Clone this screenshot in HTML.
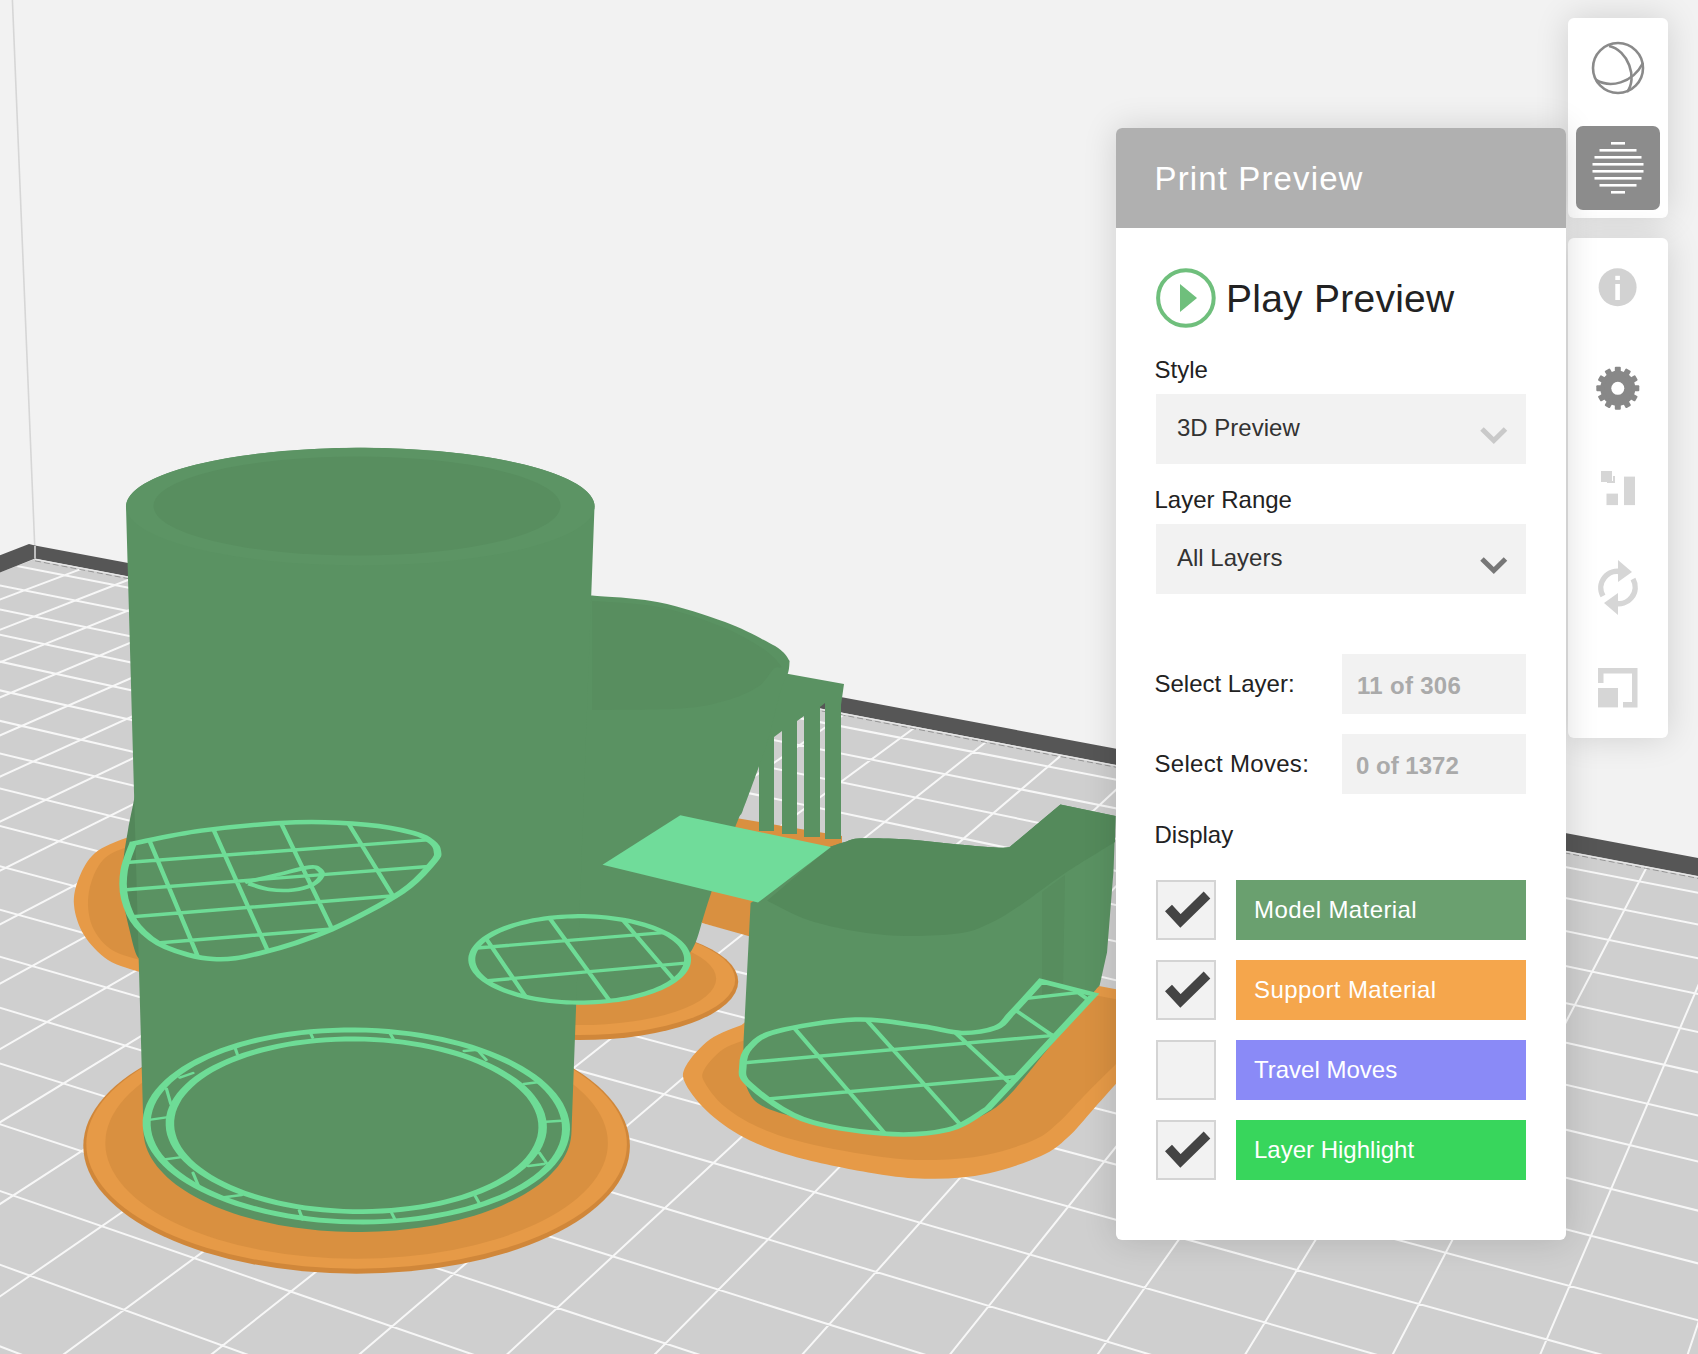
<!DOCTYPE html>
<html><head><meta charset="utf-8">
<style>
html,body{margin:0;padding:0;}
body{width:1698px;height:1354px;position:relative;overflow:hidden;background:#f2f2f2;font-family:"Liberation Sans",sans-serif;}
svg.scene{position:absolute;left:0;top:0;}
.t{position:absolute;white-space:nowrap;line-height:1;}
</style></head><body>
<svg class="scene" width="1698" height="1354" viewBox="0 0 1698 1354">
<defs>
<clipPath id="floorclip"><path d="M35 560 L1698 876 L1698 1354 L0 1354 L0 572.5 Z"/></clipPath>
</defs>
<rect width="1698" height="1354" fill="#f2f2f2"/>
<path d="M12.4 0 L34.8 548" stroke="#d6d6d6" stroke-width="1.6" fill="none"/>
<path d="M35 559 L1698 876 L1698 1354 L0 1354 L0 572.5 Z" fill="#cfcfcf"/>
<g clip-path="url(#floorclip)"><path d="M84.8 567.6L-1373.1 1115.2M135.0 577.2L-1317.3 1142.5M186.4 587.0L-1259.1 1170.9M239.1 597.1L-1198.5 1200.5M293.0 607.4L-1135.4 1231.4M348.3 618.0L-1069.4 1263.7M405.0 628.9L-1000.5 1297.4M463.2 640.0L-928.5 1332.6M522.8 651.4L-853.1 1369.5M584.0 663.2L-774.1 1408.1M646.9 675.2L-691.2 1448.7M711.4 687.6L-604.1 1491.3M777.6 700.2L-512.6 1536.1M845.8 713.3L-416.1 1583.2M915.8 726.7L-314.5 1632.9M987.8 740.5L-207.1 1685.4M1061.9 754.7L-93.6 1741.0M1138.1 769.3L26.7 1799.8M1216.6 784.3L154.3 1862.2M1297.5 799.8L289.9 1928.5M1380.8 815.8L434.4 1999.2M1466.8 832.2L588.5 2074.6M1555.4 849.2L753.5 2155.3M1646.9 866.7L930.3 2241.7M1741.4 884.8L1120.3 2334.7M1839.0 903.5L1325.1 2434.8M1939.9 922.8L1546.4 2543.1M2044.3 942.8L1786.4 2660.5M2152.3 963.5L2047.4 2788.1M2264.1 984.9L2332.5 2927.6M16.9 566.1L2382.3 1025.7M-23.4 580.8L2387.0 1062.2M-65.3 596.0L2391.9 1100.9M-108.7 611.7L2397.2 1142.0M-153.8 628.1L2402.8 1185.7M-200.7 645.2L2408.8 1232.3M-249.5 662.9L2415.1 1282.1M-300.3 681.4L2421.9 1335.3M-353.3 700.6L2429.2 1392.4M-408.5 720.7L2437.1 1453.8M-466.1 741.6L2445.6 1520.1M-526.3 763.5L2454.7 1591.7M-589.2 786.3L2464.7 1669.4M-655.1 810.3L2475.5 1754.1M-724.2 835.4L2487.3 1846.6M-796.7 861.7L2500.3 1948.2M-872.8 889.4L2514.6 2060.1M-952.9 918.5L2530.5 2184.2M-1037.2 949.1L2548.2 2322.5M-1126.2 981.5L2568.0 2477.5M-1220.1 1015.6L2590.4 2652.6M-1319.4 1051.7L2615.9 2851.8" stroke="#f7f7f7" stroke-width="2" fill="none"/></g>
<path d="M35 545.6 L1698 858 L1698 876 L35 558.5 Z" fill="#565656"/>
<path d="M29 544.1 L35 545.6 L35 558.5 L0 572.4 L0 555.2 Z" fill="#565656"/>
<path d="M35 546 L35 558.5" stroke="#e0e0e0" stroke-width="1.5"/>
<path d="M35 560.8 L1698 878.3" stroke="#7a7a7a" stroke-width="1" stroke-dasharray="6 3" fill="none" opacity="0.7"/>
<path d="M35 559.3 L1698 876.8" stroke="#e8e8e8" stroke-width="1.2" fill="none"/>
<path d="M736.0 818.0 L842.0 836.0 L842.0 846.0 L790.0 900.0 L752.0 937.0 L702.0 923.0 L700.0 850.0Z" fill="#d99040"/>
<path d="M140.0 972.0C134.7 970.0 117.3 966.2 108.0 960.0C98.7 953.8 89.7 944.2 84.0 935.0C78.3 925.8 74.8 914.5 74.0 905.0C73.2 895.5 75.5 886.7 79.0 878.0C82.5 869.3 87.2 859.7 95.0 853.0C102.8 846.3 116.8 841.2 126.0 838.0C135.2 834.8 146.0 834.7 150.0 834.0Z" fill="#e69a47"/>
<path d="M140.0 960.0C135.3 958.3 119.7 955.0 112.0 950.0C104.3 945.0 98.0 937.5 94.0 930.0C90.0 922.5 88.3 913.3 88.0 905.0C87.7 896.7 89.2 887.8 92.0 880.0C94.8 872.2 98.7 863.7 105.0 858.0C111.3 852.3 122.5 848.5 130.0 846.0C137.5 843.5 146.7 843.5 150.0 843.0Z" fill="#d99040"/>
<path d="M135.0 795.0C134.7 796.7 134.2 799.2 133.0 805.0C131.8 810.8 129.7 820.0 128.0 830.0C126.3 840.0 123.8 853.3 123.0 865.0C122.2 876.7 122.3 888.8 123.5 900.0C124.7 911.2 127.8 922.7 130.0 932.0C132.2 941.3 134.5 951.3 137.0 956.0C139.5 960.7 143.7 959.3 145.0 960.0L150 960 L150 795Z" fill="#53875a"/>
<ellipse cx="356.6" cy="1146" rx="273.3" ry="127.7" fill="#d0873a"/>
<ellipse cx="356.6" cy="1144" rx="270.3" ry="124.7" fill="#e69a47"/>
<ellipse cx="356.6" cy="1143" rx="251.3" ry="115.7" fill="#d99040"/>
<ellipse cx="579.5" cy="981.7" rx="158.7" ry="58.4" fill="#d0873a"/>
<ellipse cx="579.5" cy="979.7" rx="155.7" ry="55.4" fill="#e69a47"/>
<ellipse cx="579.5" cy="978.7" rx="136.7" ry="46.4" fill="#d99040"/>
<path d="M783.0 673.0 L844.0 684.0 L841.0 705.0 L841.0 839.0 L825.0 839.0 L825.0 703.0 L820.0 707.0 L820.0 837.0 L804.0 837.0 L804.0 716.0 L797.0 721.0 L797.0 834.0 L782.0 834.0 L782.0 731.0 L774.0 737.0 L774.0 831.0 L759.0 831.0 L759.0 747.0 L745.0 757.0Z" fill="#5a9262"/>
<path d="M592.2 595.5C603.3 596.6 636.5 597.8 658.6 602.2C680.8 606.6 706.6 615.3 725.1 622.1C743.6 628.9 759.8 638.0 769.4 643.0C779.0 648.0 779.6 649.0 783.0 652.0C786.4 655.0 788.5 659.5 789.6 661.0L789.6 661.0C789.3 663.0 789.5 668.2 788.0 673.0C786.5 677.8 783.9 679.6 780.8 690.0C777.7 700.4 773.1 722.1 769.4 735.1C765.6 748.1 762.7 755.8 758.3 768.3C753.9 780.8 746.2 801.8 742.8 810.4C739.4 819.0 742.0 810.1 738.0 820.0C734.0 829.9 724.6 854.2 719.1 869.5C713.6 884.8 708.9 899.8 705.0 912.0C701.1 924.2 698.8 934.7 695.6 942.5C692.4 950.3 687.6 956.2 686.0 959.0L687.2 963.2 L686.9 964.3 L686.6 965.3 L686.2 966.4 L685.7 967.5 L685.1 968.6 L684.5 969.7 L683.8 970.7 L683.1 971.8 L682.3 972.8 L681.4 973.9 L680.4 974.9 L679.4 975.9 L678.3 976.9 L677.2 977.9 L676.0 978.9 L674.7 979.9 L673.4 980.8 L672.0 981.8 L670.5 982.7 L669.0 983.6 L667.5 984.5 L665.8 985.4 L664.2 986.3 L662.4 987.1 L660.6 988.0 L658.8 988.8 L656.9 989.6 L655.0 990.3 L653.0 991.1 L651.0 991.8 L648.9 992.6 L646.7 993.2 L644.6 993.9 L642.4 994.6 L640.1 995.2 L637.8 995.8 L635.5 996.4 L633.1 996.9 L630.7 997.5 L628.3 998.0 L625.8 998.5 L623.3 998.9 L620.8 999.3 L618.3 999.7 L615.7 1000.1 L613.1 1000.5 L610.5 1000.8 L607.9 1001.1 L605.2 1001.4 L602.5 1001.6 L599.8 1001.8 L597.1 1002.0 L594.4 1002.2 L591.7 1002.3 L589.0 1002.4 L586.3 1002.5 L583.5 1002.6 L580.8 1002.6 L578.0 1002.6 L575.3 1002.6 L572.6 1002.5 L569.8 1002.4 L567.1 1002.3 L564.4 1002.2 L561.7 1002.0 L559.0 1001.8 L556.3 1001.6 L553.6 1001.3 L551.0 1001.0 L548.3 1000.7 L545.7 1000.4 L543.1 1000.0 L540.6 999.7 L538.0 999.2 L535.5 998.8 L533.0 998.3 L530.6 997.9 L528.1 997.3 L525.8 996.8 L560 1000 L560 595.5Z" fill="#5a9262"/>
<path d="M592.2 601.0C603.3 602.0 637.3 602.8 658.6 607.0C679.9 611.2 702.8 619.2 720.0 626.0C737.2 632.8 751.8 641.3 762.0 648.0C772.2 654.7 779.0 662.6 781.0 666.0C783.0 669.4 777.7 665.2 773.9 668.6C770.1 672.0 766.4 681.0 758.3 686.4C750.2 691.8 738.0 697.1 725.1 700.8C712.2 704.5 702.9 707.0 680.8 708.5C658.6 710.0 607.0 709.8 592.2 710.0Z" fill="#588e5f"/>
<path d="M126.0 506.6 L126.2 504.3 L126.7 501.9 L127.7 499.6 L129.0 497.3 L130.6 495.0 L132.6 492.7 L135.0 490.4 L137.8 488.2 L140.8 486.0 L144.3 483.8 L148.1 481.7 L152.2 479.6 L156.6 477.5 L161.4 475.5 L166.5 473.6 L171.8 471.7 L177.5 469.8 L183.5 468.0 L189.8 466.3 L196.3 464.6 L203.1 463.0 L210.1 461.5 L217.4 460.0 L224.9 458.6 L232.6 457.3 L240.5 456.1 L248.6 454.9 L256.8 453.8 L265.3 452.9 L273.9 451.9 L282.6 451.1 L291.5 450.4 L300.4 449.8 L309.5 449.2 L318.6 448.7 L327.8 448.4 L337.0 448.1 L346.3 447.9 L355.6 447.8 L365.0 447.8 L374.3 447.9 L383.6 448.1 L392.8 448.4 L402.0 448.7 L411.1 449.2 L420.2 449.8 L429.1 450.4 L438.0 451.1 L446.7 451.9 L455.3 452.9 L463.8 453.8 L472.0 454.9 L480.1 456.1 L488.0 457.3 L495.7 458.6 L503.2 460.0 L510.5 461.5 L517.5 463.0 L524.3 464.6 L530.8 466.3 L537.1 468.0 L543.1 469.8 L548.8 471.7 L554.1 473.6 L559.2 475.5 L564.0 477.5 L568.4 479.6 L572.5 481.7 L576.3 483.8 L579.8 486.0 L582.8 488.2 L585.6 490.4 L588.0 492.7 L590.0 495.0 L591.6 497.3 L592.9 499.6 L593.9 501.9 L594.4 504.3 L594.6 506.6 L594.5 506.6 L571.5 1131 L571.5 1131.0 L571.3 1135.0 L570.8 1139.0 L570.0 1143.0 L568.8 1147.0 L567.3 1151.0 L565.4 1154.9 L563.3 1158.8 L560.8 1162.6 L557.9 1166.4 L554.8 1170.1 L551.3 1173.8 L547.6 1177.4 L543.5 1180.9 L539.2 1184.4 L534.5 1187.7 L529.6 1191.0 L524.4 1194.2 L519.0 1197.3 L513.3 1200.3 L507.3 1203.1 L501.1 1205.9 L494.7 1208.5 L488.1 1211.0 L481.2 1213.4 L474.2 1215.7 L466.9 1217.8 L459.5 1219.8 L452.0 1221.6 L444.3 1223.3 L436.4 1224.9 L428.5 1226.3 L420.4 1227.5 L412.2 1228.6 L403.9 1229.6 L395.6 1230.4 L387.2 1231.0 L378.7 1231.5 L370.3 1231.8 L361.8 1232.0 L353.2 1232.0 L344.7 1231.8 L336.3 1231.5 L327.8 1231.0 L319.4 1230.4 L311.1 1229.6 L302.8 1228.6 L294.6 1227.5 L286.5 1226.3 L278.6 1224.9 L270.7 1223.3 L263.0 1221.6 L255.5 1219.8 L248.1 1217.8 L240.8 1215.7 L233.8 1213.4 L226.9 1211.0 L220.3 1208.5 L213.9 1205.9 L207.7 1203.1 L201.7 1200.3 L196.0 1197.3 L190.6 1194.2 L185.4 1191.0 L180.5 1187.7 L175.8 1184.4 L171.5 1180.9 L167.4 1177.4 L163.7 1173.8 L160.2 1170.1 L157.1 1166.4 L154.2 1162.6 L151.7 1158.8 L149.6 1154.9 L147.7 1151.0 L146.2 1147.0 L145.0 1143.0 L144.2 1139.0 L143.7 1135.0 L143.5 1131.0 L126 506.6Z" fill="#5a9262"/>
<ellipse cx="360.3" cy="506.6" rx="234.3" ry="58.8" fill="#5c9464"/>
<ellipse cx="357" cy="506" rx="203.5" ry="49.5" fill="#588e5f"/>
<path d="M741.6 1025.0C736.3 1027.4 719.1 1032.7 709.8 1039.5C700.5 1046.3 689.9 1058.5 685.9 1066.0C681.9 1073.5 681.9 1076.6 685.9 1084.6C689.9 1092.5 699.2 1104.4 709.8 1113.7C720.4 1123.0 734.0 1132.7 749.5 1140.2C765.0 1147.7 780.4 1153.0 802.5 1158.8C824.6 1164.5 859.9 1171.4 882.0 1174.7C904.1 1178.0 917.3 1178.9 935.0 1178.7C952.7 1178.5 970.3 1177.2 988.0 1173.4C1005.7 1169.6 1027.7 1162.1 1041.0 1156.1C1054.3 1150.1 1058.8 1145.5 1067.6 1137.6C1076.4 1129.6 1085.3 1118.1 1094.0 1108.4C1102.7 1098.7 1115.7 1084.2 1120.0 1079.3 L1120 990 L1099 986 L760 1010Z" fill="#e69a47"/>
<path d="M745.0 1040.0C741.2 1041.7 728.8 1045.0 722.0 1050.0C715.2 1055.0 706.8 1064.5 704.0 1070.0C701.2 1075.5 701.7 1077.0 705.0 1083.0C708.3 1089.0 715.2 1098.7 724.0 1106.0C732.8 1113.3 744.3 1120.8 758.0 1127.0C771.7 1133.2 785.3 1138.0 806.0 1143.0C826.7 1148.0 860.5 1154.2 882.0 1157.0C903.5 1159.8 917.7 1160.3 935.0 1160.0C952.3 1159.7 969.5 1158.3 986.0 1155.0C1002.5 1151.7 1022.0 1145.3 1034.0 1140.0C1046.0 1134.7 1049.7 1130.3 1058.0 1123.0C1066.3 1115.7 1073.7 1106.5 1084.0 1096.0C1094.3 1085.5 1114.0 1066.0 1120.0 1060.0 L1120 1000 L1099 996 L760 1020Z" fill="#d99040"/>
<path d="M750.6 903 L830.7 846.5 L830.7 846.5C833.1 845.8 839.9 843.4 845.0 842.0C850.1 840.6 850.7 838.7 861.3 838.3C871.9 837.9 892.8 838.5 908.5 839.5C924.2 840.5 939.9 842.8 955.6 844.2C971.3 845.6 993.3 847.6 1002.7 847.7C1012.1 847.8 1010.5 845.5 1012.0 845.0 L1060.4 804.6 L1115.5 816 L1113.5 871 L1107 952.5 L1099.4 986.5C1098.5 987.4 1102.4 981.6 1094.0 991.8C1085.6 1002.0 1064.5 1029.0 1049.0 1047.5C1033.5 1066.0 1015.9 1090.2 1001.3 1103.0C986.7 1115.8 972.5 1119.6 961.5 1124.3C950.5 1129.0 948.2 1129.5 935.0 1131.0C921.8 1132.5 904.1 1135.6 882.0 1133.6C859.9 1131.6 823.2 1124.1 802.5 1119.0C781.8 1113.9 767.4 1110.1 757.5 1103.0C747.6 1095.9 745.3 1081.0 742.9 1076.6 L743.6 1040 Z" fill="#5a9262"/>
<path d="M767.1 900.7 L830.7 846.5 L830.7 846.5C833.1 845.8 839.9 843.4 845.0 842.0C850.1 840.6 850.7 838.7 861.3 838.3C871.9 837.9 892.8 838.5 908.5 839.5C924.2 840.5 939.9 842.8 955.6 844.2C971.3 845.6 993.3 847.6 1002.7 847.7C1012.1 847.8 1010.5 845.5 1012.0 845.0 L1060.4 804.6 L1115.5 816 L1115.0 842.0C1106.3 847.4 1078.4 864.2 1063.0 874.5C1047.6 884.8 1034.7 895.6 1022.5 903.7C1010.3 911.8 1001.1 918.2 990.0 923.2C978.9 928.2 973.1 931.8 955.6 933.7C938.1 935.7 908.5 936.9 884.9 934.9C861.3 932.9 833.8 927.6 814.2 921.9C794.6 916.2 775.0 904.2 767.1 900.7Z" fill="#548a5b"/>
<path d="M1042 892 L1065 875 L1063 985 L1042 1000Z" fill="#53875a" opacity="0.5"/>
<path d="M680.3 815.3 L831 847.1 L758 902.5 L602.5 864.8Z" fill="#70dc9a"/>
<path fill-rule="evenodd" d="M570.0 1129.4 L569.6 1134.5 L568.6 1139.7 L567.1 1144.8 L564.9 1149.9 L562.2 1154.9 L558.9 1159.8 L555.0 1164.7 L550.6 1169.4 L545.6 1174.0 L540.1 1178.5 L534.1 1182.8 L527.6 1187.0 L520.6 1191.0 L513.2 1194.8 L505.3 1198.4 L497.0 1201.8 L488.3 1205.0 L479.3 1208.0 L469.9 1210.8 L460.2 1213.3 L450.2 1215.6 L439.9 1217.6 L429.4 1219.4 L418.7 1220.9 L407.8 1222.1 L396.8 1223.1 L385.7 1223.8 L374.5 1224.3 L363.2 1224.4 L351.9 1224.3 L340.7 1224.0 L329.4 1223.3 L318.3 1222.4 L307.2 1221.2 L296.3 1219.7 L285.6 1218.0 L275.1 1216.0 L264.7 1213.8 L254.7 1211.3 L244.9 1208.6 L235.4 1205.7 L226.3 1202.5 L217.5 1199.1 L209.1 1195.5 L201.2 1191.8 L193.6 1187.8 L186.6 1183.7 L179.9 1179.4 L173.8 1174.9 L168.2 1170.4 L163.1 1165.7 L158.6 1160.9 L154.6 1155.9 L151.1 1151.0 L148.3 1145.9 L146.0 1140.8 L144.3 1135.6 L143.2 1130.4 L142.7 1125.2 L142.7 1120.0 L143.4 1114.9 L144.7 1109.7 L146.5 1104.6 L149.0 1099.6 L152.0 1094.6 L155.6 1089.7 L159.8 1085.0 L164.5 1080.3 L169.7 1075.7 L175.4 1071.4 L181.7 1067.1 L188.4 1063.0 L195.7 1059.1 L203.3 1055.4 L211.4 1051.9 L219.9 1048.6 L228.8 1045.5 L238.0 1042.6 L247.5 1039.9 L257.4 1037.5 L267.5 1035.4 L277.9 1033.5 L288.5 1031.8 L299.3 1030.4 L310.3 1029.3 L321.3 1028.5 L332.5 1027.9 L343.8 1027.6 L355.0 1027.6 L366.3 1027.8 L377.6 1028.3 L388.7 1029.1 L399.8 1030.2 L410.8 1031.5 L421.7 1033.1 L432.3 1035.0 L442.7 1037.1 L452.9 1039.4 L462.8 1042.0 L472.5 1044.8 L481.8 1047.9 L490.7 1051.2 L499.3 1054.7 L507.5 1058.3 L515.2 1062.2 L522.6 1066.2 L529.4 1070.5 L535.8 1074.8 L541.7 1079.3 L547.0 1084.0 L551.8 1088.7 L556.1 1093.6 L559.8 1098.5 L563.0 1103.6 L565.5 1108.7 L567.5 1113.8 L568.9 1119.0 L569.8 1124.2 L570.0 1129.4Z M562.0 1129.2 L561.6 1134.2 L560.7 1139.1 L559.2 1144.0 L557.1 1148.8 L554.5 1153.5 L551.3 1158.2 L547.6 1162.8 L543.3 1167.3 L538.5 1171.7 L533.2 1175.9 L527.4 1180.1 L521.2 1184.0 L514.5 1187.8 L507.3 1191.4 L499.7 1194.9 L491.7 1198.1 L483.4 1201.2 L474.7 1204.0 L465.6 1206.7 L456.3 1209.0 L446.7 1211.2 L436.8 1213.1 L426.7 1214.8 L416.4 1216.3 L405.9 1217.5 L395.3 1218.4 L384.6 1219.1 L373.8 1219.5 L363.0 1219.6 L352.1 1219.5 L341.3 1219.2 L330.5 1218.5 L319.7 1217.7 L309.1 1216.5 L298.6 1215.1 L288.3 1213.5 L278.1 1211.6 L268.2 1209.5 L258.5 1207.1 L249.1 1204.5 L240.0 1201.7 L231.2 1198.7 L222.7 1195.5 L214.7 1192.1 L207.0 1188.5 L199.7 1184.8 L192.9 1180.8 L186.6 1176.7 L180.7 1172.5 L175.3 1168.2 L170.4 1163.7 L166.0 1159.1 L162.1 1154.5 L158.8 1149.7 L156.1 1144.9 L153.9 1140.0 L152.2 1135.1 L151.2 1130.2 L150.7 1125.2 L150.7 1120.3 L151.4 1115.4 L152.6 1110.5 L154.4 1105.6 L156.7 1100.8 L159.7 1096.1 L163.1 1091.5 L167.1 1086.9 L171.6 1082.5 L176.7 1078.2 L182.2 1074.0 L188.2 1069.9 L194.7 1066.1 L201.7 1062.4 L209.0 1058.8 L216.8 1055.5 L225.0 1052.3 L233.5 1049.4 L242.4 1046.6 L251.6 1044.1 L261.1 1041.8 L270.8 1039.8 L280.8 1038.0 L291.0 1036.4 L301.4 1035.1 L312.0 1034.0 L322.6 1033.2 L333.4 1032.7 L344.2 1032.4 L355.1 1032.4 L365.9 1032.6 L376.7 1033.1 L387.5 1033.9 L398.2 1034.9 L408.8 1036.1 L419.2 1037.7 L429.4 1039.4 L439.5 1041.4 L449.3 1043.7 L458.8 1046.1 L468.1 1048.8 L477.1 1051.7 L485.7 1054.8 L493.9 1058.2 L501.8 1061.7 L509.3 1065.3 L516.3 1069.2 L522.9 1073.2 L529.1 1077.3 L534.7 1081.6 L539.9 1086.1 L544.5 1090.6 L548.6 1095.2 L552.2 1099.9 L555.2 1104.7 L557.7 1109.5 L559.6 1114.4 L561.0 1119.3 L561.8 1124.3 L562.0 1129.2Z" fill="#6edc96"/>
<path fill-rule="evenodd" d="M546.9 1127.6 L546.6 1132.3 L545.7 1137.0 L544.3 1141.6 L542.4 1146.2 L540.0 1150.7 L537.1 1155.1 L533.6 1159.5 L529.7 1163.8 L525.3 1167.9 L520.4 1172.0 L515.0 1175.9 L509.2 1179.7 L503.0 1183.3 L496.4 1186.8 L489.4 1190.1 L482.0 1193.2 L474.3 1196.1 L466.2 1198.8 L457.8 1201.3 L449.2 1203.6 L440.3 1205.7 L431.1 1207.6 L421.7 1209.2 L412.2 1210.6 L402.5 1211.8 L392.7 1212.7 L382.8 1213.4 L372.8 1213.8 L362.7 1214.0 L352.7 1214.0 L342.6 1213.6 L332.6 1213.1 L322.6 1212.3 L312.8 1211.3 L303.0 1210.0 L293.5 1208.5 L284.0 1206.7 L274.8 1204.7 L265.8 1202.5 L257.1 1200.1 L248.7 1197.5 L240.5 1194.7 L232.7 1191.7 L225.2 1188.5 L218.1 1185.1 L211.3 1181.5 L205.0 1177.8 L199.1 1174.0 L193.6 1170.0 L188.6 1165.9 L184.0 1161.7 L179.9 1157.4 L176.4 1153.0 L173.3 1148.5 L170.7 1143.9 L168.7 1139.3 L167.1 1134.7 L166.1 1130.0 L165.7 1125.3 L165.7 1120.6 L166.3 1116.0 L167.4 1111.3 L169.1 1106.7 L171.2 1102.2 L173.9 1097.7 L177.1 1093.3 L180.8 1088.9 L185.0 1084.7 L189.6 1080.6 L194.7 1076.6 L200.3 1072.8 L206.3 1069.1 L212.7 1065.5 L219.6 1062.2 L226.8 1059.0 L234.3 1055.9 L242.2 1053.1 L250.5 1050.5 L259.0 1048.1 L267.8 1045.9 L276.8 1043.9 L286.0 1042.2 L295.5 1040.6 L305.1 1039.4 L314.9 1038.3 L324.8 1037.5 L334.7 1037.0 L344.8 1036.6 L354.8 1036.6 L364.9 1036.8 L374.9 1037.2 L384.9 1037.9 L394.8 1038.8 L404.6 1040.0 L414.3 1041.4 L423.8 1043.0 L433.1 1044.9 L442.2 1046.9 L451.1 1049.2 L459.7 1051.8 L468.0 1054.5 L476.0 1057.4 L483.6 1060.5 L490.9 1063.8 L497.9 1067.3 L504.4 1070.9 L510.5 1074.7 L516.2 1078.6 L521.5 1082.6 L526.3 1086.8 L530.6 1091.1 L534.4 1095.4 L537.7 1099.9 L540.6 1104.4 L542.9 1109.0 L544.7 1113.6 L545.9 1118.3 L546.7 1122.9 L546.9 1127.6Z M538.4 1127.5 L538.1 1131.9 L537.3 1136.4 L535.9 1140.7 L534.1 1145.1 L531.8 1149.3 L529.0 1153.5 L525.7 1157.7 L522.0 1161.7 L517.7 1165.7 L513.1 1169.5 L508.0 1173.2 L502.4 1176.8 L496.5 1180.2 L490.2 1183.5 L483.5 1186.6 L476.4 1189.5 L469.0 1192.3 L461.3 1194.9 L453.3 1197.2 L445.0 1199.4 L436.5 1201.4 L427.8 1203.2 L418.8 1204.7 L409.7 1206.0 L400.5 1207.1 L391.1 1208.0 L381.6 1208.6 L372.0 1209.0 L362.4 1209.2 L352.8 1209.2 L343.2 1208.9 L333.6 1208.3 L324.1 1207.6 L314.7 1206.6 L305.4 1205.4 L296.3 1203.9 L287.3 1202.3 L278.5 1200.4 L269.9 1198.3 L261.5 1196.1 L253.5 1193.6 L245.7 1190.9 L238.2 1188.1 L231.0 1185.0 L224.2 1181.8 L217.8 1178.5 L211.7 1175.0 L206.1 1171.3 L200.9 1167.6 L196.1 1163.7 L191.7 1159.7 L187.8 1155.6 L184.4 1151.4 L181.4 1147.2 L179.0 1142.9 L177.0 1138.5 L175.6 1134.1 L174.6 1129.7 L174.2 1125.3 L174.2 1120.9 L174.8 1116.4 L175.8 1112.1 L177.4 1107.7 L179.5 1103.4 L182.0 1099.1 L185.1 1095.0 L188.6 1090.9 L192.6 1086.9 L197.0 1083.0 L201.9 1079.2 L207.3 1075.6 L213.0 1072.1 L219.1 1068.8 L225.6 1065.6 L232.5 1062.5 L239.8 1059.7 L247.3 1057.0 L255.2 1054.5 L263.3 1052.2 L271.7 1050.2 L280.3 1048.3 L289.2 1046.6 L298.2 1045.2 L307.4 1044.0 L316.7 1043.0 L326.2 1042.3 L335.7 1041.7 L345.3 1041.4 L354.9 1041.4 L364.5 1041.6 L374.1 1042.0 L383.6 1042.6 L393.1 1043.5 L402.4 1044.6 L411.7 1045.9 L420.8 1047.5 L429.7 1049.2 L438.4 1051.2 L446.8 1053.4 L455.0 1055.8 L463.0 1058.3 L470.6 1061.1 L477.9 1064.0 L484.9 1067.2 L491.5 1070.4 L497.8 1073.9 L503.6 1077.4 L509.1 1081.1 L514.1 1085.0 L518.7 1088.9 L522.8 1092.9 L526.5 1097.1 L529.6 1101.3 L532.3 1105.6 L534.6 1109.9 L536.3 1114.3 L537.5 1118.7 L538.2 1123.1 L538.4 1127.5Z" fill="#6edc96"/>
<path fill-rule="evenodd" d="M691.1 959.4 L690.9 961.8 L690.5 964.2 L689.7 966.5 L688.6 968.9 L687.2 971.2 L685.6 973.5 L683.6 975.8 L681.3 978.0 L678.8 980.1 L675.9 982.2 L672.8 984.3 L669.5 986.2 L665.9 988.1 L662.0 989.9 L658.0 991.6 L653.7 993.3 L649.2 994.8 L644.5 996.3 L639.6 997.6 L634.5 998.8 L629.4 1000.0 L624.0 1001.0 L618.6 1001.9 L613.0 1002.6 L607.3 1003.3 L601.6 1003.8 L595.8 1004.2 L590.0 1004.5 L584.1 1004.7 L578.2 1004.7 L572.4 1004.6 L566.5 1004.4 L560.7 1004.0 L554.9 1003.6 L549.2 1003.0 L543.6 1002.3 L538.1 1001.4 L532.7 1000.5 L527.4 999.4 L522.3 998.2 L517.4 996.9 L512.6 995.6 L508.0 994.1 L503.6 992.5 L499.4 990.8 L495.4 989.0 L491.7 987.2 L488.2 985.2 L485.0 983.2 L482.0 981.2 L479.3 979.1 L476.9 976.9 L474.8 974.6 L473.0 972.4 L471.4 970.1 L470.2 967.7 L469.3 965.4 L468.6 963.0 L468.3 960.6 L468.3 958.2 L468.6 955.8 L469.3 953.4 L470.2 951.1 L471.4 948.7 L473.0 946.4 L474.8 944.2 L476.9 941.9 L479.3 939.7 L482.0 937.6 L485.0 935.6 L488.2 933.6 L491.7 931.6 L495.4 929.8 L499.4 928.0 L503.6 926.3 L508.0 924.7 L512.6 923.2 L517.4 921.9 L522.3 920.6 L527.4 919.4 L532.7 918.3 L538.1 917.4 L543.6 916.5 L549.2 915.8 L554.9 915.2 L560.7 914.8 L566.5 914.4 L572.4 914.2 L578.2 914.1 L584.1 914.1 L590.0 914.3 L595.8 914.6 L601.6 915.0 L607.3 915.5 L613.0 916.2 L618.6 916.9 L624.0 917.8 L629.4 918.8 L634.5 920.0 L639.6 921.2 L644.5 922.5 L649.2 924.0 L653.7 925.5 L658.0 927.2 L662.0 928.9 L665.9 930.7 L669.5 932.6 L672.8 934.5 L675.9 936.6 L678.8 938.7 L681.3 940.8 L683.6 943.0 L685.6 945.3 L687.2 947.6 L688.6 949.9 L689.7 952.3 L690.5 954.6 L690.9 957.0 L691.1 959.4Z M684.1 959.4 L684.0 961.6 L683.5 963.7 L682.8 965.9 L681.8 968.0 L680.5 970.1 L678.9 972.2 L677.1 974.2 L674.9 976.2 L672.5 978.2 L669.9 980.1 L667.0 982.0 L663.8 983.7 L660.5 985.4 L656.9 987.1 L653.0 988.7 L649.0 990.1 L644.8 991.5 L640.4 992.8 L635.8 994.1 L631.1 995.2 L626.2 996.2 L621.2 997.1 L616.1 997.9 L610.9 998.6 L605.6 999.2 L600.2 999.7 L594.8 1000.1 L589.3 1000.3 L583.8 1000.5 L578.3 1000.5 L572.8 1000.4 L567.3 1000.2 L561.9 999.9 L556.5 999.5 L551.1 998.9 L545.9 998.3 L540.7 997.5 L535.6 996.7 L530.7 995.7 L525.9 994.6 L521.3 993.5 L516.8 992.2 L512.5 990.8 L508.4 989.4 L504.4 987.9 L500.7 986.3 L497.2 984.6 L494.0 982.9 L490.9 981.0 L488.2 979.2 L485.6 977.2 L483.4 975.3 L481.4 973.2 L479.7 971.2 L478.2 969.1 L477.1 967.0 L476.2 964.8 L475.6 962.7 L475.3 960.5 L475.3 958.3 L475.6 956.1 L476.2 954.0 L477.1 951.8 L478.2 949.7 L479.7 947.6 L481.4 945.6 L483.4 943.5 L485.6 941.6 L488.2 939.6 L490.9 937.8 L494.0 935.9 L497.2 934.2 L500.7 932.5 L504.4 930.9 L508.4 929.4 L512.5 928.0 L516.8 926.6 L521.3 925.3 L525.9 924.2 L530.7 923.1 L535.6 922.1 L540.7 921.3 L545.9 920.5 L551.1 919.9 L556.5 919.3 L561.9 918.9 L567.3 918.6 L572.8 918.4 L578.3 918.3 L583.8 918.3 L589.3 918.5 L594.8 918.7 L600.2 919.1 L605.6 919.6 L610.9 920.2 L616.1 920.9 L621.2 921.7 L626.2 922.6 L631.1 923.6 L635.8 924.7 L640.4 926.0 L644.8 927.3 L649.0 928.7 L653.0 930.1 L656.9 931.7 L660.5 933.4 L663.8 935.1 L667.0 936.8 L669.9 938.7 L672.5 940.6 L674.9 942.6 L677.1 944.6 L678.9 946.6 L680.5 948.7 L681.8 950.8 L682.8 952.9 L683.5 955.1 L684.0 957.2 L684.1 959.4Z" fill="#6edc96"/>
<g transform="scale(1 0.75)"><path d="M310.4 1377.3L312.6 1383.6M235.0 1396.8L237.3 1405.7M179.7 1436.8L193.0 1430.7M166.4 1451.5L170.8 1472.0M150.8 1492.9L166.4 1489.9M164.0 1546.0L179.7 1543.1M193.0 1563.7L198.5 1581.3M224.0 1596.3L241.7 1593.3M299.3 1614.0L302.6 1625.9M388.7 1374.7L393.2 1384.9M464.0 1401.3L477.4 1399.7M477.4 1399.7L486.2 1413.1M524.0 1445.3L539.4 1442.7M546.0 1495.7L561.6 1494.3M528.3 1554.7L543.9 1552.0M539.4 1537.1L547.2 1552.0M475.2 1594.7L479.6 1605.1M391.0 1615.5L395.4 1627.2" stroke="#6edc96" stroke-width="3.2" fill="none" stroke-linecap="round"/></g>
<clipPath id="shclip"><path d="M133.0 843.6C144.4 841.4 174.3 834.2 201.3 830.6C228.4 827.1 268.1 823.4 295.6 822.4C323.1 821.4 346.6 823.0 366.2 824.7C385.9 826.5 402.4 830.0 413.4 833.0C424.4 835.9 428.2 839.3 432.2 842.4C436.2 845.5 437.2 848.1 437.4 851.4C437.6 854.6 439.3 855.0 433.4 861.7C427.4 868.5 418.7 880.6 401.6 891.9C384.5 903.2 354.5 919.4 330.9 929.6C307.3 939.8 279.9 948.2 260.2 953.1C240.6 958.0 228.8 960.0 213.1 959.0C197.4 958.0 178.6 952.7 166.0 947.2C153.4 941.7 144.6 934.1 137.7 926.0C130.9 918.0 127.1 908.2 124.8 898.9C122.5 889.7 122.7 879.9 124.1 870.7C125.4 861.4 131.5 848.1 133.0 843.6Z"/></clipPath>
<g clip-path="url(#shclip)"><g transform="scale(1 0.75)"><path d="M118.9 1150.8 L441.6 1118.5 M118.9 1187.0 L441.6 1154.0 M118.9 1223.7 L441.6 1189.2 M118.9 1261.4 L441.6 1226.9 M147.2 1113.8 L201.3 1286.5 M210.8 1098.1 L272.0 1280.3 M276.7 1085.5 L338.0 1255.1 M342.7 1085.5 L399.2 1208.0" stroke="#6edc96" stroke-width="4.5" fill="none" stroke-linejoin="round"/></g></g>
<g transform="scale(1 0.6)"><path d="M133.0 1406.0C144.4 1402.4 174.3 1390.3 201.3 1384.4C228.4 1378.5 268.1 1372.3 295.6 1370.6C323.1 1369.0 346.6 1371.6 366.2 1374.6C385.9 1377.5 402.4 1383.4 413.4 1388.3C424.4 1393.2 428.2 1398.9 432.2 1404.0C436.2 1409.1 437.2 1413.6 437.4 1418.9C437.6 1424.3 439.3 1424.9 433.4 1436.2C427.4 1447.5 418.7 1467.6 401.6 1486.5C384.5 1505.3 354.5 1532.3 330.9 1549.3C307.3 1566.3 279.9 1580.4 260.2 1588.5C240.6 1596.7 228.8 1600.0 213.1 1598.4C197.4 1596.7 178.6 1587.9 166.0 1578.7C153.4 1569.6 144.6 1556.8 137.7 1543.4C130.9 1530.0 127.1 1513.6 124.8 1498.2C122.5 1482.9 122.7 1466.5 124.1 1451.1C125.4 1435.7 131.5 1413.5 133.0 1406.0Z" stroke="#6edc96" stroke-width="7.5" fill="none" stroke-linejoin="miter"/></g>
<g transform="scale(1 0.6)"><path d="M244.9 1470.7C250.2 1468.7 265.9 1462.4 276.7 1458.2C287.5 1453.9 302.6 1446.7 309.7 1445.2C316.8 1443.7 317.2 1446.7 319.1 1449.2C321.1 1451.6 322.7 1455.5 321.5 1459.8C320.3 1464.0 316.8 1470.7 312.1 1474.7C307.3 1478.6 300.3 1482.0 293.2 1483.3C286.1 1484.6 277.1 1484.3 269.7 1482.5C262.2 1480.8 252.0 1474.3 248.5 1472.7" stroke="#6edc96" stroke-width="6" fill="none" stroke-linejoin="round"/></g>
<clipPath id="coneclip"><ellipse cx="579.7" cy="959.4" rx="107.9" ry="43.2"/></clipPath>
<g clip-path="url(#coneclip)"><g transform="scale(1 0.75)"><path d="M440.0 1268.0 L720.0 1237.3 M440.0 1313.3 L720.0 1280.0 M540.0 1206.7 L620.0 1353.3 M470.0 1220.0 L545.0 1366.7 M610.0 1206.7 L700.0 1346.7" stroke="#6edc96" stroke-width="4.5" fill="none" stroke-linejoin="round"/></g></g>
<clipPath id="boxclip"><path d="M1041.0 981.2 L1094.0 994.5L988.0 1108.4C981.4 1111.9 966.0 1125.4 948.3 1129.6C930.6 1133.8 906.3 1135.4 882.0 1133.6C857.7 1131.8 824.6 1127.2 802.5 1119.0C780.4 1110.8 759.4 1093.4 749.5 1084.6C739.6 1075.8 742.9 1072.2 742.9 1066.0C742.9 1059.8 744.0 1053.2 749.5 1047.5C755.0 1041.8 758.3 1036.2 776.0 1031.6C793.7 1026.9 831.2 1020.5 855.5 1019.6C879.8 1018.7 904.1 1024.1 921.8 1026.3C939.5 1028.5 949.1 1032.7 961.5 1032.9C973.9 1033.1 987.6 1030.9 996.0 1027.6C1004.4 1024.3 1004.4 1020.7 1011.9 1013.0C1019.4 1005.3 1036.2 986.5 1041.0 981.2Z"/></clipPath>
<g clip-path="url(#boxclip)"><g transform="scale(1 0.75)"><path d="M723.0 1419.6 L1120.6 1372.6 M736.3 1469.1 L1120.6 1423.1 M781.3 1350.7 L895.3 1527.4 M855.5 1343.6 L969.5 1513.2 M945.6 1364.8 L1019.9 1456.7 M1011.9 1343.6 L1062.3 1389.6 M1014.6 1333.0 L1107.3 1318.9 M1062.3 1308.3 L1099.4 1343.6" stroke="#6edc96" stroke-width="4.5" fill="none" stroke-linejoin="round"/></g></g>
<g transform="scale(1 0.6)"><path d="M1041.0 1635.3 L1094.0 1657.5L988.0 1847.3C981.4 1853.2 966.0 1875.7 948.3 1882.7C930.6 1889.7 906.3 1892.3 882.0 1889.3C857.7 1886.4 824.6 1878.6 802.5 1865.0C780.4 1851.4 759.4 1822.4 749.5 1807.7C739.6 1792.9 742.9 1787.0 742.9 1776.7C742.9 1766.4 744.0 1755.4 749.5 1745.8C755.0 1736.3 758.3 1727.1 776.0 1719.3C793.7 1711.6 831.2 1700.8 855.5 1699.3C879.8 1697.9 904.1 1706.8 921.8 1710.5C939.5 1714.2 949.1 1721.1 961.5 1721.5C973.9 1721.9 987.6 1718.2 996.0 1712.7C1004.4 1707.1 1004.4 1701.2 1011.9 1688.3C1019.4 1675.4 1036.2 1644.2 1041.0 1635.3Z" stroke="#6edc96" stroke-width="7.5" fill="none" stroke-linejoin="miter"/></g>
</svg>
<div style="position:absolute;left:1568px;top:18px;width:100px;height:200px;background:#fff;border-radius:6px;box-shadow:0 0 34px rgba(0,0,0,0.14);"></div>
<div style="position:absolute;left:1568px;top:238px;width:100px;height:500px;background:#fff;border-radius:6px;box-shadow:0 0 34px rgba(0,0,0,0.14);"></div>
<div style="position:absolute;left:1116px;top:128px;width:450px;height:1112px;background:#fff;border-radius:6px;box-shadow:0 0 34px rgba(0,0,0,0.14);overflow:hidden;">
  <div style="position:absolute;left:0;top:0;width:450px;height:100px;background:#b0b0b0;"></div>
</div>
<div style="position:absolute;left:1576px;top:126px;width:84px;height:84px;background:#8c8c8c;border-radius:7px;"></div>
<div class="t" style="left:1154.5px;top:162px;font-size:33px;color:#fff;letter-spacing:1.13px;">Print Preview</div>
<div class="t" style="left:1226px;top:279px;font-size:39px;color:#222;letter-spacing:0.25px;">Play Preview</div>
<div class="t" style="left:1154.5px;top:358px;font-size:24px;color:#222;">Style</div>
<div style="position:absolute;left:1156px;top:394px;width:370px;height:70px;background:#f2f2f2;"></div>
<div class="t" style="left:1177px;top:416px;font-size:24px;color:#333;">3D Preview</div>
<div class="t" style="left:1154.5px;top:488px;font-size:24px;color:#222;">Layer Range</div>
<div style="position:absolute;left:1156px;top:524px;width:370px;height:70px;background:#f2f2f2;"></div>
<div class="t" style="left:1177px;top:546px;font-size:24px;color:#333;">All Layers</div>
<div class="t" style="left:1154.5px;top:672px;font-size:24px;color:#222;">Select Layer:</div>
<div style="position:absolute;left:1342px;top:654px;width:184px;height:60px;background:#f2f2f2;"></div>
<div class="t" style="left:1357px;top:674px;letter-spacing:0.3px;font-size:24px;color:#aaa;font-weight:bold;">11 of 306</div>
<div class="t" style="left:1154.5px;top:752px;font-size:24px;letter-spacing:0.3px;color:#222;">Select Moves:</div>
<div style="position:absolute;left:1342px;top:734px;width:184px;height:60px;background:#f2f2f2;"></div>
<div class="t" style="left:1356px;top:754px;font-size:24px;color:#aaa;font-weight:bold;">0 of 1372</div>
<div class="t" style="left:1154.5px;top:823px;font-size:24px;color:#222;">Display</div>
<!-- play icon -->
<svg style="position:absolute;left:1150px;top:262px;" width="72" height="72" viewBox="0 0 72 72">
  <circle cx="35.9" cy="36" r="27.8" fill="none" stroke="#6fbf7c" stroke-width="4"/>
  <path d="M30 22 L47 36 L30 50 Z" fill="#6fbf7c"/>
</svg>
<!-- chevrons -->
<svg style="position:absolute;left:1476px;top:420px;" width="36" height="30" viewBox="0 0 36 30">
  <path d="M6 9 L17.8 20.5 L29.5 9" fill="none" stroke="#c9c9c9" stroke-width="5"/>
</svg>
<svg style="position:absolute;left:1476px;top:550px;" width="36" height="30" viewBox="0 0 36 30">
  <path d="M6 9 L17.8 20.5 L29.5 9" fill="none" stroke="#777" stroke-width="5"/>
</svg>
<!-- display rows -->
<div style="position:absolute;left:1156px;top:880px;width:56px;height:56px;border:2px solid #d4d4d4;background:#f2f2f2;"></div>
<div style="position:absolute;left:1156px;top:960px;width:56px;height:56px;border:2px solid #d4d4d4;background:#f2f2f2;"></div>
<div style="position:absolute;left:1156px;top:1040px;width:56px;height:56px;border:2px solid #d4d4d4;background:#f2f2f2;"></div>
<div style="position:absolute;left:1156px;top:1120px;width:56px;height:56px;border:2px solid #d4d4d4;background:#f2f2f2;"></div>
<svg style="position:absolute;left:1156px;top:880px;" width="60" height="300" viewBox="0 0 60 300">
  <g fill="none" stroke="#444" stroke-width="9.5" stroke-linejoin="miter">
    <path d="M12.5 28 L24.5 41 L51 15"/>
    <path d="M12.5 108 L24.5 121 L51 95"/>
    <path d="M12.5 268 L24.5 281 L51 255"/>
  </g>
</svg>
<div style="position:absolute;left:1236px;top:880px;width:290px;height:60px;background:#6aa06f;"></div>
<div style="position:absolute;left:1236px;top:960px;width:290px;height:60px;background:#f5a64c;"></div>
<div style="position:absolute;left:1236px;top:1040px;width:290px;height:60px;background:#8a8af7;"></div>
<div style="position:absolute;left:1236px;top:1120px;width:290px;height:60px;background:#38d65c;"></div>
<div class="t" style="left:1254px;top:898px;font-size:24px;letter-spacing:0.4px;color:#fff;">Model Material</div>
<div class="t" style="left:1254px;top:978px;font-size:24px;letter-spacing:0.4px;color:#fff;">Support Material</div>
<div class="t" style="left:1254px;top:1058px;font-size:24px;color:#fff;">Travel Moves</div>
<div class="t" style="left:1254px;top:1138px;font-size:24px;color:#fff;">Layer Highlight</div>
<!-- toolbar icons -->
<svg style="position:absolute;left:1568px;top:18px;" width="100" height="720" viewBox="1568 18 100 720">
  <g fill="none" stroke="#8a8a8a" stroke-width="2.6">
    <circle cx="1618" cy="68" r="25"/>
    <path d="M1609 46 C1628 50 1638 78 1627 92"/>
    <path d="M1596 80 C1610 88 1632 84 1643 63"/>
  </g>
  <g fill="#fff">
    <rect x="1611" y="142" width="14" height="2.6"/>
    <rect x="1599.5" y="149" width="37" height="2.6"/>
    <rect x="1594.5" y="156" width="47" height="2.6"/>
    <rect x="1592.5" y="163" width="51" height="2.6"/>
    <rect x="1592.5" y="170" width="51" height="2.6"/>
    <rect x="1594.5" y="177" width="47" height="2.6"/>
    <rect x="1599.5" y="184" width="37" height="2.6"/>
    <rect x="1611" y="191" width="14" height="2.6"/>
  </g>
  <circle cx="1617.6" cy="287.3" r="19" fill="#d2d2d2"/>
  <rect x="1615.3" y="275.8" width="4.6" height="4.2" fill="#fff"/>
  <rect x="1615.3" y="284" width="4.6" height="16" fill="#fff"/>
  <g transform="translate(1617.8 388.3)" fill="#888">
    <circle r="17.5"/>
    <g id="teeth">
      <rect x="-3" y="-21.5" width="6" height="8" rx="1"/>
    </g>
    <use href="#teeth" transform="rotate(30)"/><use href="#teeth" transform="rotate(60)"/><use href="#teeth" transform="rotate(90)"/>
    <use href="#teeth" transform="rotate(120)"/><use href="#teeth" transform="rotate(150)"/><use href="#teeth" transform="rotate(180)"/>
    <use href="#teeth" transform="rotate(210)"/><use href="#teeth" transform="rotate(240)"/><use href="#teeth" transform="rotate(270)"/>
    <use href="#teeth" transform="rotate(300)"/><use href="#teeth" transform="rotate(330)"/>
    <circle r="6.5" fill="#fff"/>
  </g>
  <g fill="#d6d6d6">
    <rect x="1601" y="471" width="11" height="11"/>
    <path d="M1607 483 L1615 483 L1615 476 L1613 476 L1613 481 L1607 481Z"/>
    <rect x="1606.5" y="493.6" width="11.5" height="11.5"/>
    <rect x="1624" y="476.6" width="11" height="28.5"/>
  </g>
  <g fill="none" stroke="#d6d6d6" stroke-width="5.5">
    <path d="M1603 596 A16.5 16.5 0 0 1 1622 572"/>
    <path d="M1633 579 A16.5 16.5 0 0 1 1614 603"/>
  </g>
  <path d="M1618 560 L1632 572 L1618 582Z" fill="#d6d6d6"/>
  <path d="M1618 615 L1604 603 L1618 593Z" fill="#d6d6d6"/>
  <g fill="#d6d6d6">
    <path d="M1598 668 L1637.5 668 L1637.5 707.4 L1623 707.4 L1623 702 L1632 702 L1632 673.5 L1603.5 673.5 L1603.5 683 L1598 683Z"/>
    <rect x="1598" y="688" width="20" height="19.4"/>
  </g>
</svg>

</body></html>
